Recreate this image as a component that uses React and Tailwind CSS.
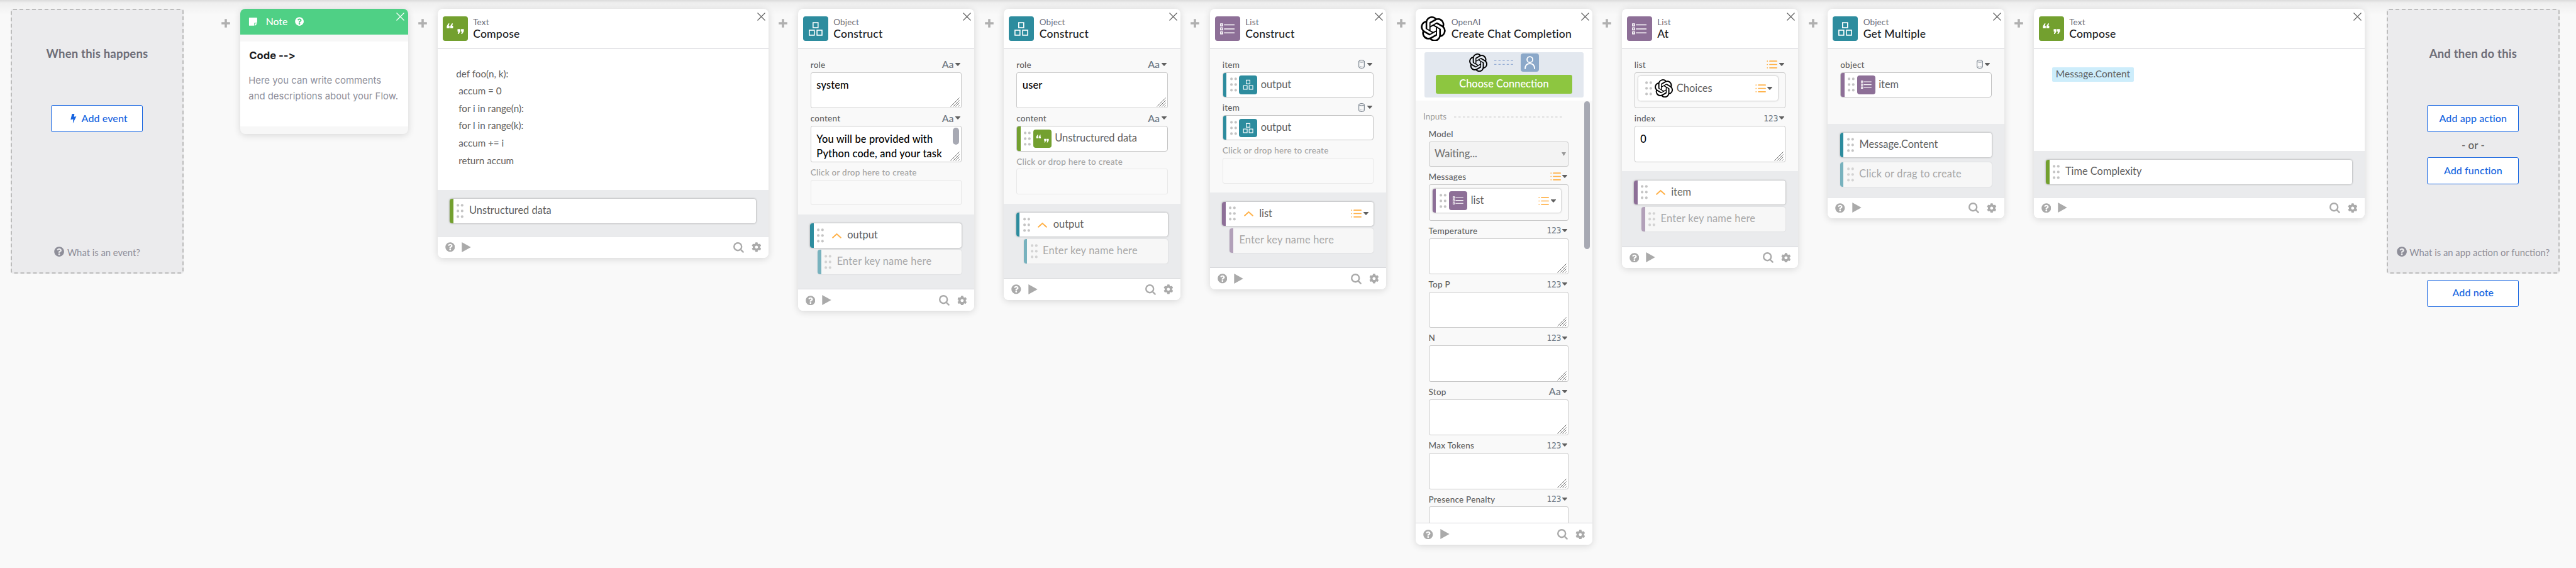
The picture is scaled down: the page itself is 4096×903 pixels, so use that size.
import { SiOpenai } from "react-icons/si";
import { FaCog, FaQuestionCircle, FaStickyNote } from "react-icons/fa";

/* ---------- icons ---------- */

function CloseIcon({ className }) {
  return (
    <svg viewBox="0 0 13 13" className={`size-[13px] ${className}`} fill="none" stroke="currentColor" strokeWidth="1.2">
      <path d="M0.5 0.5 12.5 12.5M12.5 0.5 0.5 12.5" />
    </svg>
  );
}

function PlusIcon() {
  return (
    <svg viewBox="0 0 14 14" className="size-[14px] text-[#b0b0b0]" fill="none" stroke="currentColor" strokeWidth="3.6" strokeLinecap="square">
      <path d="M7 2V12M2 7H12" />
    </svg>
  );
}

function BoxesIcon() {
  return (
    <svg viewBox="0 0 40 40" className="size-full" fill="none" stroke="#fff" strokeWidth="1.6">
      <rect x="15.9" y="10.1" width="8" height="8" />
      <rect x="9.9" y="22.1" width="8" height="8" />
      <rect x="22.2" y="22.1" width="8" height="8" />
    </svg>
  );
}

function RowsIcon() {
  return (
    <svg viewBox="0 0 40 40" className="size-full" fill="none" stroke="#fff" strokeWidth="1.5">
      <rect x="8.9" y="12" width="3.2" height="3.2" />
      <rect x="8.9" y="18.4" width="3.2" height="3.2" />
      <rect x="8.9" y="24.8" width="3.2" height="3.2" />
      <path d="M14.3 13.6H31.2M14.3 20H31.2M14.3 26.4H31.2" />
    </svg>
  );
}

function QuotesIcon() {
  return (
    <svg viewBox="0 0 40 40" className="size-full" fill="#fff">
      <path d="M6.4 19V15.6L9 11.2H10.6L9.6 15H10.9V19ZM12 19V15.6L14.6 11.2H16.2L15.2 15H16.5V19Z" />
      <path d="M23.6 20.3H28.1V23.8L25.5 28.2H23.9L24.9 24.3H23.6ZM29.2 20.3H33.7V23.8L31.1 28.2H29.5L30.5 24.3H29.2Z" />
    </svg>
  );
}

function UserIcon() {
  return (
    <svg viewBox="0 0 29 29" className="size-full" fill="none" stroke="#fff" strokeWidth="1.8">
      <circle cx="14.5" cy="9.6" r="4.5" />
      <path d="M7 24.6C7 19 10 16.1 14.5 16.1S22 19 22 24.6" />
    </svg>
  );
}

function BulletListIcon() {
  return (
    <svg viewBox="0 0 17 13" className="h-[13px] w-[17px]" fill="none" stroke="#ffb148" strokeWidth="1.7" strokeLinecap="round">
      <path d="M5 1.2H16.1M5 6.5H16.1M5 11.8H16.1M1.2 1.2H1.3M1.2 6.5H1.3M1.2 11.8H1.3" />
    </svg>
  );
}

function CylinderIcon() {
  return (
    <svg viewBox="0 0 10 14" className="h-[14px] w-[10px]" fill="none" stroke="#6b7682" strokeWidth="1">
      <ellipse cx="5" cy="2.3" rx="4.3" ry="1.7" />
      <path d="M0.7 2.3V11.7C0.7 12.7 2.6 13.4 5 13.4S9.3 12.7 9.3 11.7V2.3" />
      <path d="M1.5 11.3C3 10.5 7 10.5 8.5 11.3" strokeWidth="0.7" strokeDasharray="1 0.7" />
    </svg>
  );
}

function Caret() {
  return (
    <svg viewBox="0 0 8 5" className="h-[5px] w-[8px]" fill="#606060">
      <path d="M0 0H8V0.8L4.7 4.4Q4 5 3.3 4.4L0 0.8Z" />
    </svg>
  );
}

function ChevronUp() {
  return (
    <svg viewBox="0 0 15 9" className="h-[9px] w-[15px]" fill="none" stroke="#ffb148" strokeWidth="2" strokeLinecap="round">
      <path d="M1.2 7.8 7.5 2 13.8 7.8" />
    </svg>
  );
}

function Grip() {
  return (
    <svg viewBox="0 0 11 23" className="h-[23px] w-[11px]" fill="#c4c4c4">
      {[2.4, 11.4, 20.4].map((y) => (
        <g key={y}>
          <circle cx="2.1" cy={y} r="2.05" />
          <circle cx="8.8" cy={y} r="2.05" />
        </g>
      ))}
    </svg>
  );
}

function ResizeHandle() {
  return (
    <svg viewBox="0 0 15 15" className="absolute right-[2px] bottom-[1px] size-[15px]" fill="none" stroke="#6a6a6a" strokeWidth="1">
      <path d="M0.5 14.5 14.5 0.5M4.5 14.5 14.5 4.5M8.5 14.5 14.5 8.5M12.5 14.5 14.5 12.5" />
    </svg>
  );
}

function BoltIcon() {
  return (
    <svg viewBox="0 0 10 16" className="h-[15.5px] w-[9.6px]" fill="#1664e0">
      <path d="M2.6 0H6.6L5.9 4.9L9.8 4.1L4 15.8L4.6 8.7L0.3 9.5Z" />
    </svg>
  );
}

/* ---------- app tiles ---------- */

const tiles = {
  text: { bg: "bg-[#73a02f]", Icon: QuotesIcon },
  object: { bg: "bg-[#2d8c9e]", Icon: BoxesIcon },
  list: { bg: "bg-[#8d6f97]", Icon: RowsIcon },
};

const stripes = {
  text: "bg-[#73a02f]",
  object: "bg-[#2d8c9e]",
  list: "bg-[#8d6f97]",
  none: "bg-white",
};

const fadedStripes = {
  object: "bg-[#78b2be]",
  list: "bg-[#b2a0b9]",
};

function Tile({ kind, className }) {
  if (kind === "openai") return <SiOpenai className={`shrink-0 text-black ${className}`} />;
  const { bg, Icon } = tiles[kind];
  return (
    <div className={`shrink-0 rounded-[4px] ${bg} ${className}`}>
      <Icon />
    </div>
  );
}

/* ---------- card chrome ---------- */

function Slot() {
  return (
    <div className="flex w-[46.8px] shrink-0 justify-center pt-[15.7px]">
      <PlusIcon />
    </div>
  );
}

function CardHeader({ kind, app, title }) {
  return (
    <div className="flex h-[64.3px] shrink-0 border-b border-[#d5d6da] pt-[11.6px] pl-[8.2px]">
      <Tile kind={kind} className="size-[39.8px]" />
      <div className="ml-[8.6px] min-w-0 grow whitespace-nowrap">
        <div className="mt-px text-[13.5px] leading-[17px] tracking-[0.15px] text-[#6e6e78]">{app}</div>
        <div className="mt-[-1px] text-[17.6px] leading-[21px] font-medium tracking-[0.2px] text-[#1c1c22]">{title}</div>
      </div>
      <CloseIcon className="mt-[-6px] mr-[5px] text-[#606060]" />
    </div>
  );
}

function CardFooter() {
  return (
    <div className="flex h-[34.8px] shrink-0 items-center border-t border-[#d5d6da] bg-white pr-[11.6px] pl-[12px] text-[#aaaaaa]">
      <FaQuestionCircle className="size-[15.6px]" />
      <svg viewBox="0 0 15 16" className="ml-[11.2px] h-[16px] w-[15px]" fill="currentColor">
        <path d="M0.3 0 14.7 8 0.3 16Z" />
      </svg>
      <svg viewBox="0 0 17 17" className="ml-auto size-[17px]" fill="none" stroke="currentColor" strokeWidth="2.4" strokeLinecap="round">
        <circle cx="7.2" cy="7.2" r="6" />
        <path d="M11.6 11.6 15.6 15.6" />
      </svg>
      <FaCog className="ml-[12px] size-[15.7px]" />
    </div>
  );
}

function Card({ kind, app, title, wide, children }) {
  return (
    <div
      className={`flex shrink-0 flex-col overflow-hidden rounded-[8px] bg-white shadow-[0_2px_12px_rgba(0,0,0,0.14)] ${
        wide ? "w-[526.3px]" : "w-[280.7px]"
      }`}
    >
      <CardHeader kind={kind} app={app} title={title} />
      {children}
      <CardFooter />
    </div>
  );
}

function Inputs({ children, className = "" }) {
  return <div className={`bg-[#f9f9f9] px-[20.1px] pt-[11.9px] pb-[11.3px] ${className}`}>{children}</div>;
}

function Outputs({ children, className = "h-[118.8px]" }) {
  return <div className={`shrink-0 bg-[#eaebed] pt-[14.2px] pr-[20px] pl-[19.8px] ${className}`}>{children}</div>;
}

/* ---------- fields ---------- */

function TypePicker({ type }) {
  if (!type) return null;
  return (
    <div className="mr-[2.2px] flex items-center text-[#6b7682]">
      {type === "text" && <span className="mr-[2.5px] text-[16px] leading-none font-medium">Aa</span>}
      {type === "number" && (
        <span className="mr-[2px] [font-family:'DejaVu_Sans_Condensed','DejaVu_Sans',sans-serif] text-[14px] leading-none tracking-[-0.4px]">
          123
        </span>
      )}
      {type === "list" && (
        <span className="mr-[2.6px]">
          <BulletListIcon />
        </span>
      )}
      {type === "any" && (
        <span className="mr-[3.8px]">
          <CylinderIcon />
        </span>
      )}
      <Caret />
    </div>
  );
}

function Field({ label, type, muted, children }) {
  return (
    <div className="mb-[3.3px]">
      <div className="flex h-[24.6px] items-center justify-between">
        <span
          className={`pt-[2.4px] text-[13.5px] leading-none font-medium tracking-[0.25px] ${muted ? "text-[#a2a2a2]" : "text-[#606060]"}`}
        >
          {label}
        </span>
        <TypePicker type={type} />
      </div>
      {children}
    </div>
  );
}

function TextArea({ children, scrolled }) {
  return (
    <div className="relative h-[57.5px] overflow-hidden rounded-[3px] border border-[#c8c8c8] bg-white pt-[7.6px] pl-[8.6px] text-[16.4px] leading-[23px] font-medium tracking-[0.15px] whitespace-nowrap text-black">
      {children}
      {scrolled && <div className="absolute top-[1.5px] right-[3.6px] h-[27.6px] w-[9.4px] rounded-full bg-[#a7a9b3]" />}
      <ResizeHandle />
    </div>
  );
}

function DropBox() {
  return <div className="h-[40.5px] rounded-[3px] border border-[#e8e8e8] bg-[#fafafa]" />;
}

function ValueBox({ kind, children }) {
  return (
    <div className="flex h-[40.4px] items-center overflow-hidden rounded-[4px] border border-[#c2c2c2] bg-white">
      <div className={`h-full w-[5.4px] ${stripes[kind]}`} />
      <div className="ml-[5.6px]">
        <Grip />
      </div>
      <Tile kind={kind} className="ml-[3.6px] size-[29.2px]" />
      <span className="ml-[5.2px] pb-[2px] text-[16.4px] leading-none text-[#606060]">{children}</span>
    </div>
  );
}

function NestedValue({ kind, tile, children, width }) {
  return (
    <div className="h-[57.6px] rounded-[3px] border border-[#c8c8c8] pt-[5.6px] pl-[5.6px]">
      <div className={`flex h-[38.8px] items-center overflow-hidden rounded-[4px] bg-white shadow-[0_0_3px_rgba(0,0,0,0.35)] ${width}`}>
        <div className={`h-full w-[5.4px] ${stripes[kind]}`} />
        <div className="ml-[5.8px]">
          <Grip />
        </div>
        <Tile kind={tile} className="ml-[4px] size-[29.2px]" />
        <span className="ml-[5.2px] pb-[2px] text-[16.4px] leading-none text-[#606060]">{children}</span>
        <div className="mr-[6.4px] ml-auto">
          <TypePicker type="list" />
        </div>
      </div>
    </div>
  );
}

function Pill({ kind, chevron, type, children }) {
  return (
    <div className="flex h-[38.7px] items-center overflow-hidden rounded-[4px] bg-white shadow-[0_0_3px_rgba(0,0,0,0.38)]">
      <div className={`h-full w-[5.4px] ${stripes[kind]}`} />
      <div className="ml-[5.6px]">
        <Grip />
      </div>
      {chevron && (
        <div className="ml-[12.2px] w-[15px]">
          <ChevronUp />
        </div>
      )}
      <span className={`pb-[2px] text-[16.4px] leading-none text-[#606060] ${chevron ? "ml-[9.6px]" : "ml-[8.6px]"}`}>{children}</span>
      {type && (
        <div className="mr-[6.4px] ml-auto">
          <TypePicker type={type} />
        </div>
      )}
    </div>
  );
}

function GhostPill({ kind, grip = true, indent = true, children }) {
  return (
    <div
      className={`flex h-[38.4px] items-center overflow-hidden rounded-[4px] bg-[#f7f7f7] shadow-[0_0_2px_rgba(0,0,0,0.14)] ${
        indent ? "mt-[3.9px] ml-[11.8px]" : "mt-[8.4px]"
      }`}
    >
      <div className={`h-full w-[5.4px] ${fadedStripes[kind]}`} />
      {grip && (
        <div className="ml-[5.6px] opacity-70">
          <Grip />
        </div>
      )}
      <span className={`pb-[2px] text-[16.4px] leading-none tracking-[0.2px] text-[#a8a8a8] ${grip ? "ml-[8.4px]" : "ml-[9.8px]"}`}>
        {children}
      </span>
    </div>
  );
}

/* ---------- ends of the flow ---------- */

function OutlineButton({ children }) {
  return (
    <button className="flex h-[42.9px] w-[146px] items-center justify-center rounded-[3px] border border-[#1664e0] bg-white pb-[1.4px] text-[16px] leading-none font-medium tracking-[0.1px] text-[#1664e0]">
      {children}
    </button>
  );
}

function EndPanel({ title, help, children }) {
  return (
    <div className="flex h-[421px] w-[274.6px] shrink-0 flex-col items-center rounded-[4px] border-2 border-dashed border-[#bcbcbc] bg-[#ebebed]">
      <div className="mt-[56px] text-[18.5px] leading-[26px] font-bold tracking-[0.2px] text-[#6e6e78]">{title}</div>
      <div className="mt-[68.8px] flex grow flex-col items-center">{children}</div>
      <div className="mb-[22px] flex items-center text-[14.8px] leading-[20px] whitespace-nowrap text-[#8e8e99]">
        <FaQuestionCircle className="mr-[4.6px] mb-[2px] size-[16.2px]" />
        <span>{help}</span>
      </div>
    </div>
  );
}

function NoteCard() {
  return (
    <div className="flex h-[198.9px] w-[266.8px] shrink-0 flex-col overflow-hidden rounded-[8px] bg-[#f7f7f7] shadow-[0_2px_12px_rgba(0,0,0,0.14)]">
      <div className="flex h-[40.8px] items-center bg-[#4fd085] pr-[5.6px] pl-[12.9px] text-white">
        <FaStickyNote className="size-[14.8px]" />
        <span className="ml-[13px] pb-[2px] text-[15.8px] leading-none font-medium">Note</span>
        <FaQuestionCircle className="mb-px ml-[12px] size-[14.2px]" />
        <CloseIcon className="mb-[16px] ml-auto" />
      </div>
      <div className="mt-[11.6px] h-[134.6px] bg-white pt-[10.8px] pl-[13.3px] [font-family:Inter,sans-serif]">
        <div className="pl-px text-[16.6px] leading-[22px] font-bold text-[#1c1c22] [font-feature-settings:'calt'_0]">Code --&gt;</div>
        <div className="mt-[16.6px] text-[14.9px] leading-[25.7px] whitespace-nowrap text-[#8e8e99]">
          Here you can write comments
          <br />
          and descriptions about your Flow.
        </div>
      </div>
    </div>
  );
}

function ConnectionPanel() {
  return (
    <div className="bg-white px-[14.1px] pt-[4.6px] pb-[4.6px]">
      <div className="flex h-[72.4px] flex-col items-center rounded-[3px] bg-[#e3e8ef] pt-[1.8px]">
        <div className="flex items-center gap-[11.6px]">
          <Tile kind="openai" className="size-[29.2px]" />
          <svg viewBox="0 0 30 8" className="h-[8px] w-[30px]" fill="none" stroke="#93abd4" strokeWidth="1.2" strokeDasharray="3.4 3.2">
            <path d="M0 1.5H30M0 7.3H30" />
          </svg>
          <div className="size-[29.2px] rounded-[4px] bg-[#8ba8c9]">
            <UserIcon />
          </div>
        </div>
        <div className="mt-[4.8px] flex h-[30.6px] w-[217.5px] items-center justify-center rounded-[3px] bg-[#8dc640] pb-[2px] text-[16.4px] leading-none font-medium text-white">
          Choose Connection
        </div>
      </div>
    </div>
  );
}

const completionFields = [
  ["Temperature", "number"],
  ["Top P", "number"],
  ["N", "number"],
  ["Stop", "text"],
  ["Max Tokens", "number"],
  ["Presence Penalty", "number"],
];

function ChatCompletionCard() {
  return (
    <Card kind="openai" app="OpenAI" title="Create Chat Completion">
      <ConnectionPanel />
      <div className="relative h-[671.6px] overflow-hidden bg-[#f9f9f9] pt-[14.5px] pr-[37.4px] pl-[20.4px]">
        <div className="ml-[-8.5px] flex h-[23px] items-center">
          <span className="text-[13.5px] leading-none text-[#9c9c9c]">Inputs</span>
          <svg viewBox="0 0 174 2" className="ml-[12.4px] h-[2px] w-[174px]" fill="none" stroke="#c8c8c8" strokeWidth="1.2" strokeDasharray="3.5 3.5">
            <path d="M0 1H174" />
          </svg>
        </div>
        <div className="mt-[2.8px]">
          <Field label="Model">
            <div className="flex h-[40.4px] items-center justify-between rounded-[3px] border border-[#c8c8c8] bg-[#f3f3f3] pr-[3.8px] pl-[8.6px]">
              <span className="pb-[2px] text-[16.4px] leading-none font-medium text-[#757575]">Waiting...</span>
              <svg viewBox="0 0 7 6" className="h-[6px] w-[7px]" fill="#999">
                <path d="M0 0H7L3.5 6Z" />
              </svg>
            </div>
          </Field>
          <Field label="Messages" type="list">
            <NestedValue kind="list" tile="list" width="w-[204px]">
              list
            </NestedValue>
          </Field>
          {completionFields.map(([label, type]) => (
            <Field key={label} label={label} type={type}>
              <TextArea />
            </Field>
          ))}
        </div>
        <div className="absolute top-[1.4px] right-[3.4px] h-[234.8px] w-[9.4px] rounded-full bg-[#a7a9b3]" />
      </div>
    </Card>
  );
}

export default function App() {
  return (
    <div className="relative h-[903px] w-[4096px] overflow-hidden bg-[#f9f9f9] [font-family:Lato,'Open_Sans',sans-serif]">
      <div className="absolute inset-x-0 top-0 h-[24px] bg-linear-to-b from-black/12 via-black/4 via-20% to-transparent" />
      <div className="relative flex items-start pt-[14px] pl-[17.2px]">
        <EndPanel title="When this happens" help="What is an event?">
          <OutlineButton>
            <span className="mr-[7.8px] ml-[6px] pt-[2px]">
              <BoltIcon />
            </span>
            Add event
          </OutlineButton>
        </EndPanel>

        <div className="w-[43.4px] shrink-0" />
        <Slot />
        <NoteCard />

        <Slot />
        <Card kind="text" app="Text" title="Compose" wide>
          <div className="h-[223.8px] pt-[25.4px] pl-[29.8px] text-[15.2px] leading-[27.6px] whitespace-pre text-[#606060]">
            {"def foo(n, k):\n accum = 0\n for i in range(n):\n for l in range(k):\n accum += i\n return accum"}
          </div>
          <Outputs className="h-[73.2px]">
            <Pill kind="text">Unstructured data</Pill>
          </Outputs>
        </Card>

        <Slot />
        <Card kind="object" app="Object" title="Construct">
          <Inputs>
            <Field label="role" type="text">
              <TextArea>system</TextArea>
            </Field>
            <Field label="content" type="text">
              <TextArea scrolled>
                You will be provided with
                <br />
                Python code, and your task
              </TextArea>
            </Field>
            <Field label="Click or drop here to create" muted>
              <DropBox />
            </Field>
          </Inputs>
          <Outputs>
            <Pill kind="object" chevron>
              output
            </Pill>
            <GhostPill kind="object">Enter key name here</GhostPill>
          </Outputs>
        </Card>

        <Slot />
        <Card kind="object" app="Object" title="Construct">
          <Inputs>
            <Field label="role" type="text">
              <TextArea>user</TextArea>
            </Field>
            <Field label="content" type="text">
              <ValueBox kind="text">Unstructured data</ValueBox>
            </Field>
            <Field label="Click or drop here to create" muted>
              <DropBox />
            </Field>
          </Inputs>
          <Outputs>
            <Pill kind="object" chevron>
              output
            </Pill>
            <GhostPill kind="object">Enter key name here</GhostPill>
          </Outputs>
        </Card>

        <Slot />
        <Card kind="list" app="List" title="Construct">
          <Inputs>
            <Field label="item" type="any">
              <ValueBox kind="object">output</ValueBox>
            </Field>
            <Field label="item" type="any">
              <ValueBox kind="object">output</ValueBox>
            </Field>
            <Field label="Click or drop here to create" muted>
              <DropBox />
            </Field>
          </Inputs>
          <Outputs>
            <Pill kind="list" chevron type="list">
              list
            </Pill>
            <GhostPill kind="list" grip={false}>
              Enter key name here
            </GhostPill>
          </Outputs>
        </Card>

        <Slot />
        <ChatCompletionCard />

        <Slot />
        <Card kind="list" app="List" title="At">
          <Inputs>
            <Field label="list" type="list">
              <NestedValue kind="none" tile="openai" width="w-[221.5px]">
                Choices
              </NestedValue>
            </Field>
            <Field label="index" type="number">
              <TextArea>0</TextArea>
            </Field>
          </Inputs>
          <Outputs className="h-[119.2px]">
            <Pill kind="list" chevron>
              item
            </Pill>
            <GhostPill kind="list">Enter key name here</GhostPill>
          </Outputs>
        </Card>

        <Slot />
        <Card kind="object" app="Object" title="Get Multiple">
          <Inputs className="h-[118.7px]">
            <Field label="object" type="any">
              <ValueBox kind="list">item</ValueBox>
            </Field>
          </Inputs>
          <Outputs className="h-[115.6px]">
            <Pill kind="object">Message.Content</Pill>
            <GhostPill kind="object" indent={false}>
              Click or drag to create
            </GhostPill>
          </Outputs>
        </Card>

        <Slot />
        <Card kind="text" app="Text" title="Compose" wide>
          <div className="h-[161.5px] pt-[29.2px] pl-[29.5px]">
            <span className="flex h-[22.8px] w-fit items-center rounded-[2px] bg-[#cdedfb] px-[5.8px] pb-[2px] text-[15.5px] leading-none text-[#606060]">
              Message.Content
            </span>
          </div>
          <Outputs className="h-[72.8px]">
            <Pill kind="text">Time Complexity</Pill>
          </Outputs>
        </Card>

        <div className="ml-[35.2px] flex flex-col items-center">
          <EndPanel title="And then do this" help="What is an app action or function?">
            <OutlineButton>Add app action</OutlineButton>
            <div className="flex h-[40.8px] items-center text-[17px] leading-none font-medium text-[#606060]">- or -</div>
            <OutlineButton>Add function</OutlineButton>
          </EndPanel>
          <div className="mt-[9.7px]">
            <OutlineButton>Add note</OutlineButton>
          </div>
        </div>
      </div>
    </div>
  );
}
